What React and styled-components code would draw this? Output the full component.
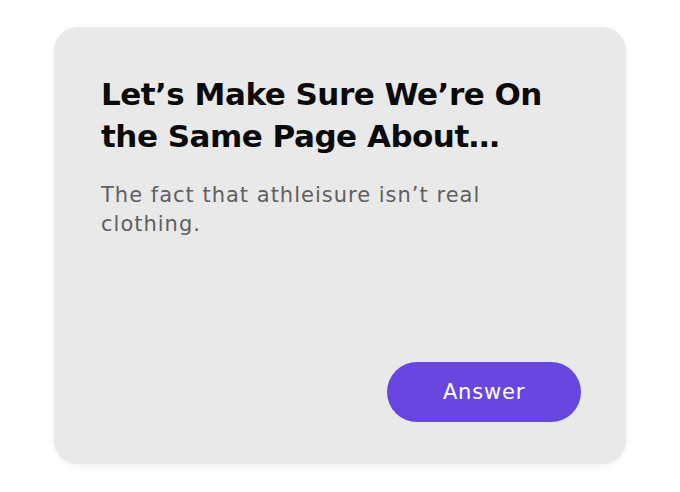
import styled, { createGlobalStyle } from "styled-components";

const GlobalStyle = createGlobalStyle`
  html, body {
    margin: 0;
    padding: 0;
    background: #ffffff;
  }
  body {
    font-family: "DejaVu Sans", "Noto Sans", sans-serif;
  }
`;

const Page = styled.div`
  width: 680px;
  height: 492px;
  display: flex;
  align-items: flex-start;
  justify-content: center;
  padding-top: 27px;
  box-sizing: border-box;
`;

const Card = styled.div`
  width: 572px;
  height: 437px;
  box-sizing: border-box;
  padding: 46px 45px 42px 47px;
  background: #e9e9e9;
  border-radius: 24px;
  box-shadow: 0 2px 6px rgba(0, 0, 0, 0.06);
  display: flex;
  flex-direction: column;
`;

const Title = styled.h2`
  margin: 0;
  font-size: 31px;
  line-height: 42px;
  font-weight: 700;
  letter-spacing: -0.5px;
  color: #0a0a0a;
  max-width: 460px;
`;

const Text = styled.p`
  margin: 24px 0 0;
  font-size: 21px;
  line-height: 29px;
  letter-spacing: 1px;
  color: #606060;
  max-width: 420px;
`;

const Footer = styled.div`
  margin-top: auto;
  display: flex;
  justify-content: flex-end;
`;

const Button = styled.button`
  width: 194px;
  height: 60px;
  border: none;
  border-radius: 30px;
  background: #6846e0;
  color: #ffffff;
  font-family: inherit;
  font-size: 21px;
  font-weight: 500;
  letter-spacing: 0.8px;
  cursor: pointer;
`;

export default function App() {
  return (
    <>
      <GlobalStyle />
      <Page>
        <Card>
          <Title>Let’s Make Sure We’re On the Same Page About…</Title>
          <Text>The fact that athleisure isn’t real clothing.</Text>
          <Footer>
            <Button>Answer</Button>
          </Footer>
        </Card>
      </Page>
    </>
  );
}
